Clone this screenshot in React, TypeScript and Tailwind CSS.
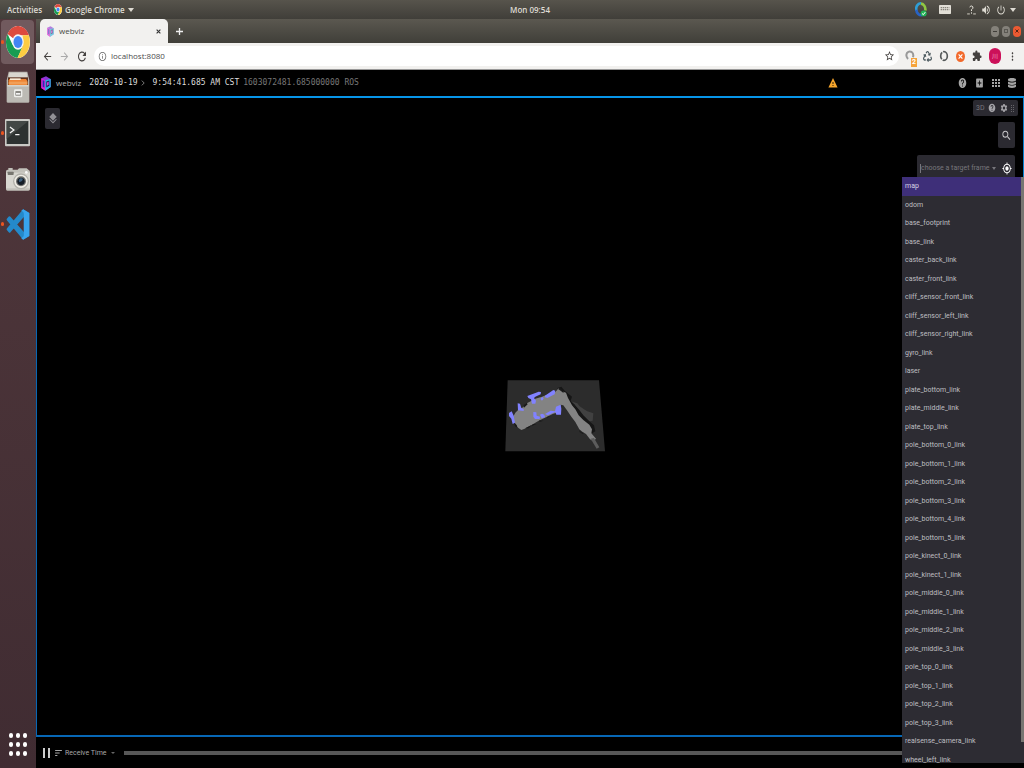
import React from "react";
import {
  MdAddBox,
  MdApps,
  MdArrowBack,
  MdArrowForward,
  MdExtension,
  MdHelp,
  MdInfoOutline,
  MdLayers,
  MdMoreVert,
  MdMyLocation,
  MdPowerSettingsNew,
  MdRefresh,
  MdSearch,
  MdSettings,
  MdSort,
  MdStarBorder,
  MdVolumeUp,
  MdWarning,
} from "react-icons/md";
import { FaDatabase, FaRecycle } from "react-icons/fa";

const frames = [
  "map",
  "odom",
  "base_footprint",
  "base_link",
  "caster_back_link",
  "caster_front_link",
  "cliff_sensor_front_link",
  "cliff_sensor_left_link",
  "cliff_sensor_right_link",
  "gyro_link",
  "laser",
  "plate_bottom_link",
  "plate_middle_link",
  "plate_top_link",
  "pole_bottom_0_link",
  "pole_bottom_1_link",
  "pole_bottom_2_link",
  "pole_bottom_3_link",
  "pole_bottom_4_link",
  "pole_bottom_5_link",
  "pole_kinect_0_link",
  "pole_kinect_1_link",
  "pole_middle_0_link",
  "pole_middle_1_link",
  "pole_middle_2_link",
  "pole_middle_3_link",
  "pole_top_0_link",
  "pole_top_1_link",
  "pole_top_2_link",
  "pole_top_3_link",
  "realsense_camera_link",
  "wheel_left_link",
];

function ChromeLogo({ className }: { className: string }) {
  return (
    <svg viewBox="0 0 48 48" preserveAspectRatio="none" className={className} aria-hidden="true">
      <circle cx="24" cy="24" r="24" fill="#fff" />
      <path d="M24 24 3.2 12A24 24 0 0 1 44.8 12L46 14H24Z" fill="#dd4b3e" />
      <path d="M3.2 12A24 24 0 0 0 23 48L34 30 24 24 13 28Z" fill="#179c52" />
      <path d="M45.5 14A24 24 0 0 1 23 48L33.5 29.5 33 14Z" fill="#fdcc42" />
      <circle cx="24" cy="24" r="11.5" fill="#f5f5f5" />
      <circle cx="24" cy="24" r="9" fill="#4285f4" />
    </svg>
  );
}

function WebvizLogo({ className }: { className: string }) {
  return (
    <svg viewBox="0 0 30 46" preserveAspectRatio="none" className={className} aria-hidden="true">
      <path d="M1 7 15 1 29 9V34L13 45 1 37Z" fill="#8b35d6" />
      <path d="M1 7 13 13V45L1 37Z" fill="#e01fd0" />
      <path d="M5 12 10 15V36L5 33Z" fill="#2430b8" />
      <path d="M13 13 29 9V34L13 45Z" fill="#22b8dc" />
      <path d="M16 17 25 14V30L16 35Z" fill="#26145c" />
      <path d="M18 20 23 18V27L18 30Z" fill="#d63bdd" />
    </svg>
  );
}

function FilesIcon() {
  return (
    <svg viewBox="0 0 72 96" preserveAspectRatio="none" className="h-8 w-6" aria-hidden="true">
      <path d="M8 2H64L70 28V92Q70 95 66 95H6Q2 95 2 92V28Z" fill="#b9b7b0" />
      <path d="M10 5H62L65 26H7Z" fill="#d9d7cf" />
      <rect x="6" y="19" width="60" height="24" fill="#5d3421" />
      <path d="M10 24H60L64 30V42H8V28Z" fill="#ef8434" />
      <path d="M12 22H44V27H12Z" fill="#f7ebd6" />
      <path d="M8 32H64V40H8Z" fill="#f19f58" />
      <rect x="4" y="43" width="64" height="49" rx="2" fill="#bcbab4" />
      <rect x="4" y="43" width="64" height="3" fill="#e8e6df" />
      <rect x="24" y="55" width="25" height="24" rx="4" fill="#efefec" />
      <rect x="28" y="60" width="17" height="14" rx="2" fill="#8b8984" />
      <rect x="30" y="66" width="13" height="5" fill="#f4f4f4" />
    </svg>
  );
}

function TerminalIcon() {
  return (
    <svg viewBox="0 0 76 84" preserveAspectRatio="none" className="h-7 w-[25px]" aria-hidden="true">
      <rect width="76" height="82" rx="3" fill="#c9c9c5" />
      <rect x="5" y="6" width="66" height="69" fill="#2d3231" />
      <path d="M5 6H71L5 60Z" fill="#434846" />
      <path d="m15 24 12 9-12 9M31 47h13" fill="none" stroke="#f4f4f4" strokeWidth="4" />
    </svg>
  );
}

function CameraIcon() {
  return (
    <svg viewBox="0 0 72 72" preserveAspectRatio="none" className="h-6 w-6" aria-hidden="true">
      <path d="M7 8V3H20V8H35L39 4H62L68 9Q72 10 72 15V67Q72 71 67 71H4Q0 71 0 67V13Q0 8 5 8Z" fill="#c2c1ba" />
      <path d="M0 17H72V64H0Z" fill="#d8d7d0" />
      <rect x="5" y="14" width="18" height="10" rx="2" fill="#77766f" />
      <circle cx="45" cy="43" r="24" fill="#b2b1aa" />
      <circle cx="45" cy="43" r="20" fill="#efede5" />
      <circle cx="45" cy="43" r="15" fill="#6c6d6b" />
      <circle cx="45" cy="43" r="11" fill="#141d26" />
      <path d="M38 39 44 33 51 35 48 42 40 46Z" fill="#40607b" />
      <circle cx="61" cy="16" r="4" fill="#fafafa" />
    </svg>
  );
}

function CodeIcon() {
  return (
    <svg viewBox="0 0 70 92" preserveAspectRatio="none" className="h-[31px] w-6" aria-hidden="true">
      <path d="M50 1 68 12V80L50 91 3 34Q0 30 3 28L8 22Q11 20 13 23L52 68V24L13 69Q11 72 8 69L3 63Q0 60 3 57Z" fill="#2489ca" />
      <path d="M50 1 68 12V80L50 91 44 86Q52 84 52 78V15Q52 7 44 6Z" fill="#38a4ee" />
    </svg>
  );
}

function MapDrawing() {
  return (
    <svg viewBox="0 0 390 270" className="h-[90px] w-[130px]" role="img" aria-label="Occupancy grid map">
      <path d="M53 31H327L345 244H46Z" fill="#2c2c2c" />
      <path d="M236 92 262 100 268 108 282 118 292 124 310 130 308 152 298 154 280 144 262 138 244 124Z" fill="#414141" />
      <path d="M202 54 214 50 224 62 236 72 246 80 242 92 254 104 268 120 280 136 298 154 312 166 316 184 306 190 230 98Z" fill="#161616" />
      <path d="M76 128 88 116 100 112 106 102 122 94 136 86 156 80 176 72 196 66 206 55 216 64 228 68 234 84 246 106 256 118 266 136 280 150 298 164 306 178 304 190 318 206 310 214 300 208 288 192 278 186 268 178 256 156 244 140 232 122 220 106 212 104 206 126 188 132 168 142 146 152 126 164 104 176 94 180 82 172 72 156 66 146Z" fill="#838383" />
      <path d="M302 206 312 204 328 232 320 236Z" fill="#5c5c5c" />
      <path d="m72 157 8 8 3 9-8-5ZM105 175l20-10-9 10ZM129 162l10 0-15 7ZM148 151l13 1-13 4ZM172 140l10-2-11 6ZM102 113l-1-8 9-7 3 5ZM204 57l7-3 8 8 2 8-8-7ZM267 180l7 7 8 2-4 3-9-6ZM246 98l8 6 6 13-8-7Z" fill="#1a1a1a" />
      <path d="M112 78 146 65 153 66 152 73 136 80 132 84 138 92 136 101H126L123 88 115 84ZM165 77 190 60 196 62 194 73 172 84 165 82ZM152 85 157 81 161 85 158 91H153ZM83 100 90 101 94 114 101 117V123L84 121ZM57 129 65 124 71 137 75 158 68 162 64 146 57 138ZM130 126 139 127 140 137 150 140 149 147H135L130 140ZM150 134 156 131 163 134 165 142 155 145ZM165 132 182 122 195 124 198 110 212 104 214 116 213 134H199L196 126 173 136Z" fill="#8182ff" />
    </svg>
  );
}

const dockButton = "relative flex w-full items-center justify-center";

function Running() {
  return <span className="absolute left-px top-1/2 h-1 w-[3px] -translate-y-1/2 rounded-full bg-[#e95420]" />;
}

function Dock() {
  return (
    <nav aria-label="Dock" className="flex w-9 shrink-0 flex-col items-center bg-linear-to-b from-[#51383c] to-[#402c32] pr-px">
      <button aria-label="Google Chrome" className={`${dockButton} mt-px h-11 shrink-0`}>
        <span className="flex h-full w-[33px] items-center justify-center rounded-sm bg-[#715a5e]">
          <ChromeLogo className="h-8 w-6" />
        </span>
        <Running />
      </button>
      <button aria-label="Files" className={`${dockButton} h-[46px]`}><FilesIcon /></button>
      <button aria-label="Terminal" className={`${dockButton} h-[46px]`}><TerminalIcon /><Running /></button>
      <button aria-label="Camera" className={`${dockButton} h-[46px]`}><CameraIcon /></button>
      <button aria-label="Visual Studio Code" className={`${dockButton} h-[44px]`}><CodeIcon /><Running /></button>
      <button aria-label="Show applications" className="mb-3 mt-auto grid grid-cols-3 gap-x-[3px] gap-y-1">
        {Array.from({ length: 9 }, (_, i) => (
          <span key={i} className="h-[5px] w-1 rounded-full bg-white" />
        ))}
      </button>
    </nav>
  );
}

function SystemBar() {
  return (
    <header className="grid h-[19px] shrink-0 grid-cols-[1fr_auto_1fr] items-center bg-linear-to-b from-[#57544c] to-[#403e39] px-[7px] font-['Open_Sans',sans-serif] text-[8px] font-semibold text-[#dedbd3]">
      <div className="flex items-center gap-3">
        <button>Activities</button>
        <button className="flex items-center gap-[3px]">
          <ChromeLogo className="h-[11px] w-2" />
          Google Chrome
          <span className="border-x-[3px] border-t-4 border-x-transparent border-t-[#dedbd3]" />
        </button>
      </div>
      <time className="pl-9">Mon 09:54</time>
      <div className="flex items-center justify-end">
        <svg viewBox="0 0 36 46" className="mr-3 h-[15px] w-3" preserveAspectRatio="none" aria-hidden="true">
          <path d="M18 4A14 18 0 0 0 4 27" fill="none" stroke="#2f9fd6" strokeWidth="8" />
          <path d="M18 5A14 18 0 0 1 31 26" fill="none" stroke="#8fc742" strokeWidth="8" />
          <path d="M4 24A15 17 0 0 0 22 40" fill="none" stroke="#2863c4" strokeWidth="8" />
          <circle cx="26" cy="35" r="9" fill="#22b357" />
          <path d="m21 35 4 4 6-8" fill="none" stroke="#fff" strokeWidth="3" />
        </svg>
        <svg viewBox="0 0 36 27" className="mr-4 h-[9px] w-3" aria-hidden="true">
          <rect width="36" height="27" rx="2" fill="#e2dfd7" />
          <path d="M5 8H31M5 14H31" stroke="#86837b" strokeWidth="4" strokeDasharray="4 2" />
        </svg>
        <svg viewBox="0 0 26 30" className="mr-[5px] h-[10px] w-[9px]" aria-hidden="true">
          <path d="M8 7Q9 2 14 3 19 5 17 10L13 14V18M13 22V26" stroke="#e2dfd7" strokeWidth="3" fill="none" />
          <path d="M0 24H8V29H0ZM18 24H26V29H18Z" fill="#96938a" />
        </svg>
        <MdVolumeUp className="mr-[5px] h-3 w-[10px]" preserveAspectRatio="none" />
        <MdPowerSettingsNew className="mr-1 h-3 w-[10px]" preserveAspectRatio="none" />
        <span className="mr-px border-x-[3px] border-t-4 border-x-transparent border-t-[#dedbd3]" />
      </div>
    </header>
  );
}

function BrowserChrome() {
  return (
    <>
      <div className="flex h-6 shrink-0 items-end bg-linear-to-b from-[#5b5850] to-[#403f39] pl-1">
        <div className="flex h-6 w-32 items-center rounded-t-[5px] bg-[#f2f1ef] px-[7px] font-['Open_Sans',sans-serif] text-[8px] text-[#494744]">
          <WebvizLogo className="mr-[5px] h-[11px] w-[7px] opacity-60" />
          <span className="flex-1">webviz</span>
          <button aria-label="Close tab">
            <svg viewBox="0 0 8 8" className="size-[5px]" stroke="#333" strokeWidth="1.8"><path d="m1 1 6 6m0-6L1 7" /></svg>
          </button>
        </div>
        <button aria-label="New tab" className="ml-2 self-center">
          <svg viewBox="0 0 8 8" className="size-[7px]" stroke="#eee" strokeWidth="1.5"><path d="M4 0V8M0 4H8" /></svg>
        </button>
        <div className="ml-auto mr-[3px] flex gap-[3px] self-center">
          <button aria-label="Minimize" className="flex h-[11px] w-2 items-center justify-center rounded-full bg-[#84817a]">
            <span className="h-px w-1 bg-[#403e39]" />
          </button>
          <button aria-label="Maximize" className="flex h-[11px] w-2 items-center justify-center rounded-full bg-[#84817a]">
            <span className="size-1 border border-[#5a5852]" />
          </button>
          <button aria-label="Close" className="flex h-[11px] w-2 items-center justify-center rounded-full bg-[#ed5a32]">
            <svg viewBox="0 0 8 8" className="size-1" stroke="#592313" strokeWidth="2"><path d="m1 1 6 6m0-6L1 7" /></svg>
          </button>
        </div>
      </div>
      <div className="flex h-[27px] shrink-0 items-center border-b border-[#999] bg-[#f2f1ef] pl-[6px] pr-[7px] text-[#44413f]">
        <button aria-label="Back" className="mr-[6px]"><MdArrowBack className="h-[13px] w-[11px]" preserveAspectRatio="none" /></button>
        <button aria-label="Forward" className="mr-[6px] text-[#aaa]"><MdArrowForward className="h-[13px] w-[11px]" preserveAspectRatio="none" /></button>
        <button aria-label="Reload" className="mr-[6px]"><MdRefresh className="h-[15px] w-3" preserveAspectRatio="none" /></button>
        <div className="mr-[6px] flex h-5 flex-1 items-center rounded-full bg-white pl-1 pr-1">
          <MdInfoOutline className="mr-1 h-[11px] w-[9px] text-[#666]" preserveAspectRatio="none" />
          <input
            aria-label="Address"
            defaultValue="localhost:8080"
            className="min-w-0 flex-1 bg-transparent font-['Open_Sans',sans-serif] text-[8px] text-[#4c4c4c] outline-none"
          />
          <button aria-label="Bookmark"><MdStarBorder className="h-3 w-[11px]" preserveAspectRatio="none" /></button>
        </div>
        <div className="flex items-center gap-[7px]">
          <button aria-label="Extension with 2 notifications" className="relative h-[13px] w-[11px]">
            <svg viewBox="0 0 30 36" className="h-3 w-[10px]" aria-hidden="true">
              <path d="M9 27Q1 18 6 9 12 2 20 6 27 11 24 22" fill="none" stroke="#999" strokeWidth="6" />
            </svg>
            <span className="absolute -bottom-1 -right-px flex h-[9px] w-[6px] items-center justify-center bg-[#f5a33b] font-['Roboto',sans-serif] text-[7px] font-bold leading-none text-white">2</span>
          </button>
          <button aria-label="Recycle extension"><FaRecycle className="h-[11px] w-[9px] text-[#4c5a60]" preserveAspectRatio="none" /></button>
          <button aria-label="Ring extension">
            <svg viewBox="0 0 30 36" className="h-3 w-[10px]" aria-hidden="true">
              <ellipse cx="15" cy="18" rx="10" ry="13" fill="none" stroke="#55595a" strokeWidth="5" strokeDasharray="22 3" />
            </svg>
          </button>
          <button aria-label="Blocker extension">
            <svg viewBox="0 0 24 30" className="h-[11px] w-[9px]" preserveAspectRatio="none" aria-hidden="true">
              <ellipse cx="12" cy="15" rx="12" ry="15" fill="#f26a2c" />
              <path d="m7 9 10 12m0-12L7 21" stroke="#fff" strokeWidth="3" />
            </svg>
          </button>
          <button aria-label="Extensions"><MdExtension className="h-3 w-[10px]" preserveAspectRatio="none" /></button>
          <button aria-label="Profile" className="flex h-4 w-3 items-center justify-center rounded-full bg-[#cc1159] font-['Noto_Sans_CJK_SC',sans-serif] text-[6px] text-[#f8b0cb]">川</button>
          <button aria-label="Browser menu"><MdMoreVert className="h-[13px] w-[9px]" preserveAspectRatio="none" /></button>
        </div>
      </div>
    </>
  );
}

function AppBar() {
  return (
    <div className="flex h-[26px] shrink-0 items-center bg-black pl-[5px] pr-2 font-['DejaVu_Sans_Mono',monospace] text-[8px] text-[#ddd]">
      <WebvizLogo className="mr-[5px] h-[15px] w-[10px]" />
      <a href="#home" className="mr-2 font-['Open_Sans',sans-serif] text-[#b5b5b5]">webviz</a>
      <span>2020-10-19</span>
      <svg viewBox="0 0 6 10" className="ml-[3px] mr-2 h-[6px] w-1" fill="none" stroke="#888" strokeWidth="1.5" aria-hidden="true"><path d="m1 1 4 4-4 4" /></svg>
      <span className="mr-1">9:54:41.685 AM CST</span>
      <span className="text-[#777]">1603072481.685000000 ROS</span>
      <div className="ml-auto flex items-center gap-2 text-[#a5a5a5]">
        <button aria-label="Warnings" className="mr-28"><MdWarning className="h-3 w-[10px] text-[#f5a52c]" preserveAspectRatio="none" /></button>
        <button aria-label="Help"><MdHelp className="h-3 w-[9px]" preserveAspectRatio="none" /></button>
        <button aria-label="Add panel"><MdAddBox className="h-3 w-[9px]" preserveAspectRatio="none" /></button>
        <button aria-label="Layouts">
          <svg viewBox="0 0 8 9" className="h-[9px] w-2" fill="currentColor" aria-hidden="true">
            <path d="M0 0h2v2H0zM3 0h2v2H3zM6 0h2v2H6zM0 3h2v2H0zM3 3h2v2H3zM6 3h2v2H6zM0 6h2v2H0zM3 6h2v2H3zM6 6h2v2H6z" />
          </svg>
        </button>
        <button aria-label="Data sources"><FaDatabase className="h-[10px] w-2" preserveAspectRatio="none" /></button>
      </div>
    </div>
  );
}

function FramePicker() {
  return (
    <div role="listbox" aria-label="Target frames" className="absolute bottom-[5px] right-0 top-[158px] flex w-[122px] overflow-hidden bg-[#2d2c33]">
      <ul className="grid h-[592px] flex-1 auto-rows-fr">
        {frames.map((frame, i) => (
          <li
            key={frame}
            role="option"
            aria-selected={i === 0}
            className="flex items-center pl-[3px] aria-selected:bg-[#3e2f79] aria-selected:text-[#d7d2e5]"
          >
            {frame}
          </li>
        ))}
      </ul>
      <span className="mb-[21px] w-[3px] bg-[#777672]" />
    </div>
  );
}

export default function App() {
  return (
    <div className="flex h-screen flex-col overflow-hidden bg-black font-['Roboto',sans-serif] text-[7px] leading-3 text-[#bfbfc1]">
      <SystemBar />
      <div className="flex min-h-0 flex-1">
        <Dock />
        <main className="relative flex min-w-0 flex-1 flex-col">
          <BrowserChrome />
          <AppBar />
          <section aria-label="3D view" className="grid min-h-0 flex-1 border-x border-y-2 border-[#0767b5] border-t-[#0795e8] border-r-[#0784d1]">
            <div className="col-start-1 row-start-1 flex items-center justify-center pb-1 pl-[50px]">
              <MapDrawing />
            </div>
            <div className="col-start-1 row-start-1 flex items-start justify-between pl-2 pr-[5px]">
              <button aria-label="Topics" className="mt-[10px] flex h-[21px] w-[15px] items-center justify-center rounded-xs bg-[#2b2a31] text-[#929196]">
                <MdLayers className="h-[13px] w-[10px]" preserveAspectRatio="none" />
              </button>
              <div className="flex flex-col items-end pt-[2px]">
                <div className="flex h-4 w-[45px] items-center justify-between rounded-xs bg-[#2b2a31] px-[3px] text-[#77767c]">
                  <span>3D</span>
                  <button aria-label="Panel help"><MdHelp className="h-[10px] w-2 text-[#a5a4a9]" preserveAspectRatio="none" /></button>
                  <button aria-label="Panel settings"><MdSettings className="h-[10px] w-2 text-[#a5a4a9]" preserveAspectRatio="none" /></button>
                  <button aria-label="Move panel" className="pr-px">
                    <svg viewBox="0 0 3 7" className="h-[7px] w-[3px]" fill="#66656a" aria-hidden="true"><path d="M0 0h1v1H0zM2 0h1v1H2zM0 2h1v1H0zM2 2h1v1H2zM0 4h1v1H0zM2 4h1v1H2zM0 6h1v1H0zM2 6h1v1H2z" /></svg>
                  </button>
                </div>
                <button aria-label="Search" className="mr-[3px] mt-[6px] flex h-[26px] w-[17px] items-center justify-center rounded-xs bg-[#2b2a31] text-[#c8c7ca]">
                  <MdSearch className="h-[13px] w-[11px]" preserveAspectRatio="none" />
                </button>
                <div className="mr-[3px] mt-[7px] flex h-[26px] w-[98px] items-center rounded-xs bg-[#2b2a31] pl-[3px]">
                  <input
                    aria-label="Target frame"
                    placeholder="choose a target frame"
                    className="w-[70px] border-l border-[#77767c] bg-transparent leading-[9px] outline-none placeholder:text-[#77767c]"
                  />
                  <span className="ml-[2px] border-x-2 border-t-[3px] border-x-transparent border-t-[#77767c]" />
                  <button aria-label="Follow frame" className="ml-[6px]"><MdMyLocation className="h-[13px] w-[10px] text-white" preserveAspectRatio="none" /></button>
                </div>
              </div>
            </div>
          </section>
          <footer className="flex h-[31px] shrink-0 items-center bg-black pl-[7px] text-[#a8a8a8]">
            <button aria-label="Pause" className="mr-1 flex gap-[3px]">
              <span className="h-[10px] w-[2px] bg-[#ccc]" />
              <span className="h-[10px] w-[2px] bg-[#ccc]" />
            </button>
            <button className="flex items-center gap-[2px]">
              <MdSort className="h-3 w-[9px]" preserveAspectRatio="none" />
              Receive Time
              <span className="ml-[2px] border-x-2 border-t-2 border-x-transparent border-t-[#666]" />
            </button>
            <div role="progressbar" aria-label="Playback" className="ml-[9px] h-1 flex-1 bg-[#575757]" />
          </footer>
          <FramePicker />
        </main>
      </div>
    </div>
  );
}
